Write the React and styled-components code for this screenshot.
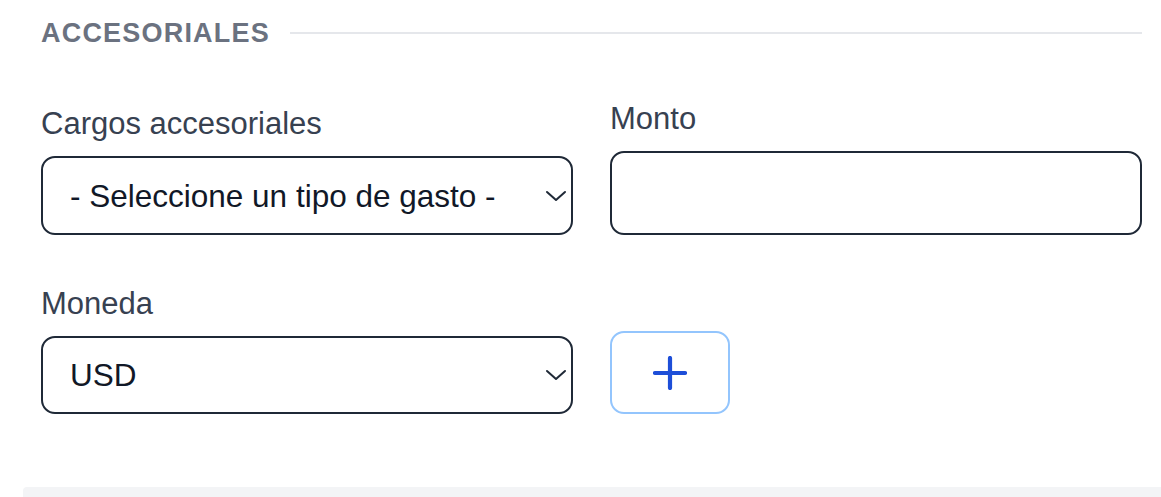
import React from "react";
import styled, { createGlobalStyle } from "styled-components";

const Global = createGlobalStyle`
  html, body { margin: 0; padding: 0; background: #ffffff; }
  body { font-family: "Liberation Sans", Arial, sans-serif; }
  * { box-sizing: border-box; }
`;

const Page = styled.div`
  width: 1161px;
  height: 497px;
  overflow: hidden;
  display: flex;
  flex-direction: column;
`;

const Section = styled.section`
  padding: 16px 19px 0 41px;
  height: 487px;
  display: flex;
  flex-direction: column;
`;

const HeadingRow = styled.div`
  display: flex;
  align-items: center;
  gap: 20px;
  height: 34px;
`;

const Heading = styled.h2`
  margin: 0;
  font-size: 27px;
  line-height: 34px;
  font-weight: 700;
  letter-spacing: 1.2px;
  color: #6b7280;
  white-space: nowrap;
`;

const Rule = styled.div`
  flex: 1;
  height: 2px;
  background: #e5e7eb;
`;

const Grid = styled.div`
  display: grid;
  grid-template-columns: 532px 532px;
  column-gap: 37px;
  row-gap: 51px;
  align-items: end;
  margin-top: ${(p) => p.$top}px;
`;

const Field = styled.div`
  display: flex;
  flex-direction: column;
`;

const Label = styled.label`
  font-size: 31px;
  line-height: 36px;
  color: #374151;
  margin-bottom: 14px;
`;

const SelectWrap = styled.div`
  position: relative;
  height: ${(p) => p.$h}px;
`;

const Select = styled.select`
  appearance: none;
  -webkit-appearance: none;
  width: 100%;
  height: 100%;
  border: 2px solid #1f2937;
  border-radius: 14px;
  background: #ffffff;
  padding: 0 60px 0 27px;
  font-family: "Liberation Sans", Arial, sans-serif;
  font-size: 31.5px;
  color: #111827;
  outline: none;
`;

const Chevron = styled.svg`
  position: absolute;
  right: 5px;
  top: 50%;
  transform: translateY(-50%);
  pointer-events: none;
`;

const Input = styled.input`
  width: 100%;
  height: 84px;
  border: 2px solid #1f2937;
  border-radius: 14px;
  background: #ffffff;
  padding: 0 27px;
  font-family: "Liberation Sans", Arial, sans-serif;
  font-size: 31.5px;
  outline: none;
`;

const AddButton = styled.button`
  width: 120px;
  height: 83px;
  border: 2px solid #93c5fd;
  border-radius: 14px;
  background: #ffffff;
  display: flex;
  align-items: center;
  justify-content: center;
  padding: 0;
  cursor: pointer;
`;

const NextCard = styled.div`
  margin-left: 23px;
  flex: 1;
  background: #f3f4f6;
  border-top-left-radius: 4px;
`;

function ChevronIcon() {
  return (
    <Chevron width="24" height="14" viewBox="0 0 24 14" fill="none">
      <path d="M3 3 L12 11 L21 3" stroke="#1f2937" strokeWidth="2" strokeLinecap="round" strokeLinejoin="round" />
    </Chevron>
  );
}

export default function App() {
  return (
    <Page>
      <Global />
      <Section>
        <HeadingRow>
          <Heading>ACCESORIALES</Heading>
          <Rule />
        </HeadingRow>
        <Grid $top={51}>
          <Field>
            <Label>Cargos accesoriales</Label>
            <SelectWrap $h={79}>
              <Select defaultValue="">
                <option value="">- Seleccione un tipo de gasto -</option>
              </Select>
              <ChevronIcon />
            </SelectWrap>
          </Field>
          <Field>
            <Label>Monto</Label>
            <Input type="text" />
          </Field>
          <Field>
            <Label>Moneda</Label>
            <SelectWrap $h={78}>
              <Select defaultValue="USD">
                <option value="USD">USD</option>
              </Select>
              <ChevronIcon />
            </SelectWrap>
          </Field>
          <Field>
            <AddButton aria-label="Agregar">
              <svg width="34" height="34" viewBox="0 0 34 34" fill="none">
                <path d="M17 2 V32 M2 17 H32" stroke="#1d4ed8" strokeWidth="4.2" strokeLinecap="round" />
              </svg>
            </AddButton>
          </Field>
        </Grid>
      </Section>
      <NextCard />
    </Page>
  );
}
